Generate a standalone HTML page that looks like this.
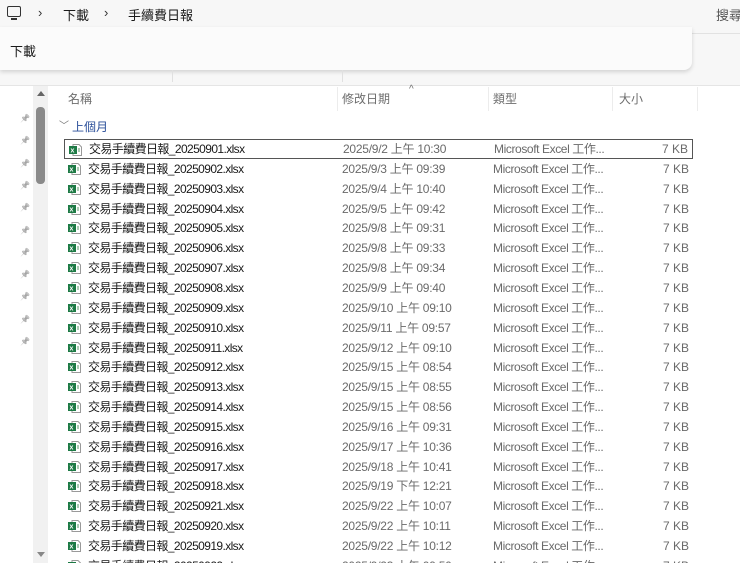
<!DOCTYPE html>
<html><head><meta charset="utf-8"><style>
*{margin:0;padding:0;box-sizing:border-box}
body{width:740px;height:574px;overflow:hidden;background:#fff;font-family:"Liberation Sans","Noto Sans CJK TC",sans-serif;font-size:12px;color:#1a1a1a;position:relative}
.abs{position:absolute;white-space:nowrap}
.top{left:0;top:0;width:740px;height:86px;background:#f7f7f7}
.pop{left:0;top:27px;width:692px;height:43px;background:#fbfbfb;border-radius:0 0 8px 0;box-shadow:0 2px 4px rgba(0,0,0,.15)}
.g{color:#6d6d6d}
.row{position:absolute;left:64px;width:629px;height:20px;line-height:20px}
.ic{position:absolute;left:4px;top:4px;width:13px;height:12px}
.nm{position:absolute;left:24px;letter-spacing:-0.6px}
.dt{position:absolute;left:278px;color:#6a6a6a;letter-spacing:-0.25px}
.tp{position:absolute;left:429px;color:#6a6a6a;letter-spacing:-0.4px}
.sz{position:absolute;right:4px;color:#6a6a6a}
.pin{position:absolute;left:20px;width:8px;height:8px;filter:grayscale(1);opacity:.5;font-size:8px}
</style></head><body>
<div class="abs top"></div>
<div class="abs" style="left:7px;top:6px;width:14px;height:11px;border:1.5px solid #333;border-radius:2px"></div>
<div class="abs" style="left:11px;top:18px;width:6px;height:2px;background:#333"></div>
<div class="abs" style="left:38px;top:5px;font-size:13px;color:#333">›</div>
<div class="abs" style="left:63px;top:5px;font-size:13px">下載</div>
<div class="abs" style="left:104px;top:5px;font-size:13px;color:#333">›</div>
<div class="abs" style="left:128px;top:5px;font-size:13px">手續費日報</div>
<div class="abs" style="left:716px;top:5px;font-size:13px;color:#555">搜尋</div>
<div class="abs" style="left:692px;top:33px;width:48px;height:1px;background:#e2e2e2"></div>
<div class="abs pop"></div>
<div class="abs" style="left:10px;top:41px;font-size:13px">下載</div>
<div class="abs" style="left:172px;top:70px;width:1px;height:12px;background:#e0e0e0"></div>
<div class="abs" style="left:342px;top:70px;width:1px;height:12px;background:#e0e0e0"></div>
<div class="abs" style="left:0;top:85px;width:740px;height:1px;background:#e5e5e5"></div>
<div class="abs" style="left:33px;top:86px;width:15px;height:477px;background:#f1f1f1"></div>
<div class="abs" style="left:36px;top:107px;width:9px;height:77px;background:#8a8a8a;border-radius:4px"></div>
<div class="abs" style="left:37px;top:91px;width:0;height:0;border-left:4px solid transparent;border-right:4px solid transparent;border-bottom:5px solid #666"></div>
<div class="abs" style="left:37px;top:552px;width:0;height:0;border-left:4px solid transparent;border-right:4px solid transparent;border-top:5px solid #888"></div>
<div class="abs g" style="left:68px;top:90px">名稱</div>
<div class="abs g" style="left:342px;top:90px">修改日期</div>
<div class="abs g" style="left:409px;top:84px;font-size:10px">^</div>
<div class="abs g" style="left:493px;top:90px">類型</div>
<div class="abs g" style="left:619px;top:90px">大小</div>
<div class="abs" style="left:337px;top:87px;width:1px;height:24px;background:#ececec"></div>
<div class="abs" style="left:488px;top:87px;width:1px;height:24px;background:#ececec"></div>
<div class="abs" style="left:612px;top:87px;width:1px;height:24px;background:#ececec"></div>
<div class="abs" style="left:697px;top:87px;width:1px;height:24px;background:#ececec"></div>
<div class="abs" style="left:59px;top:117px;color:#777;font-size:10px">﹀</div>
<div class="abs" style="left:72px;top:118px;color:#2b4f9a">上個月</div>
<div id="rows"></div>
<div class="abs" style="left:0;top:563px;width:740px;height:11px;background:#fff"></div>
<script>
var d=[["01","9/2 上午 10:30"],["02","9/3 上午 09:39"],["03","9/4 上午 10:40"],["04","9/5 上午 09:42"],["05","9/8 上午 09:31"],["06","9/8 上午 09:33"],["07","9/8 上午 09:34"],["08","9/9 上午 09:40"],["09","9/10 上午 09:10"],["10","9/11 上午 09:57"],["11","9/12 上午 09:10"],["12","9/15 上午 08:54"],["13","9/15 上午 08:55"],["14","9/15 上午 08:56"],["15","9/16 上午 09:31"],["16","9/17 上午 10:36"],["17","9/18 上午 10:41"],["18","9/19 下午 12:21"],["21","9/22 上午 10:07"],["20","9/22 上午 10:11"],["19","9/22 上午 10:12"],["22","9/23 上午 09:50"]];
var h="";
for(var i=0;i<d.length;i++){var y=139+i*19.85;
h+='<div class="row" style="top:'+y+'px;'+(i==0?'border:1px solid #555;line-height:18px':'')+'"><svg class="ic" viewBox="0 0 13 12"><path d="M4 .5h6l2.5 2.5v8.5H4z" fill="#fff" stroke="#999"/><rect x="0" y="2" width="8" height="8" fill="#1d7a45"/><text x="1.5" y="8.5" font-size="7" fill="#fff" font-family="Liberation Sans" font-weight="bold">x</text><path d="M9 5h2M9 7h2" stroke="#5a9a6a"/></svg><span class="nm">交易手續費日報_202509'+d[i][0]+'.xlsx</span><span class="dt">2025/'+d[i][1]+'</span><span class="tp">Microsoft Excel 工作...</span><span class="sz">7 KB</span></div>';}
document.getElementById("rows").innerHTML=h;
var p="";for(var j=0;j<11;j++){p+='<div class="pin" style="top:'+(114+j*22.3)+'px">📌</div>';}
document.body.insertAdjacentHTML("beforeend",p);
</script>
</body></html>
